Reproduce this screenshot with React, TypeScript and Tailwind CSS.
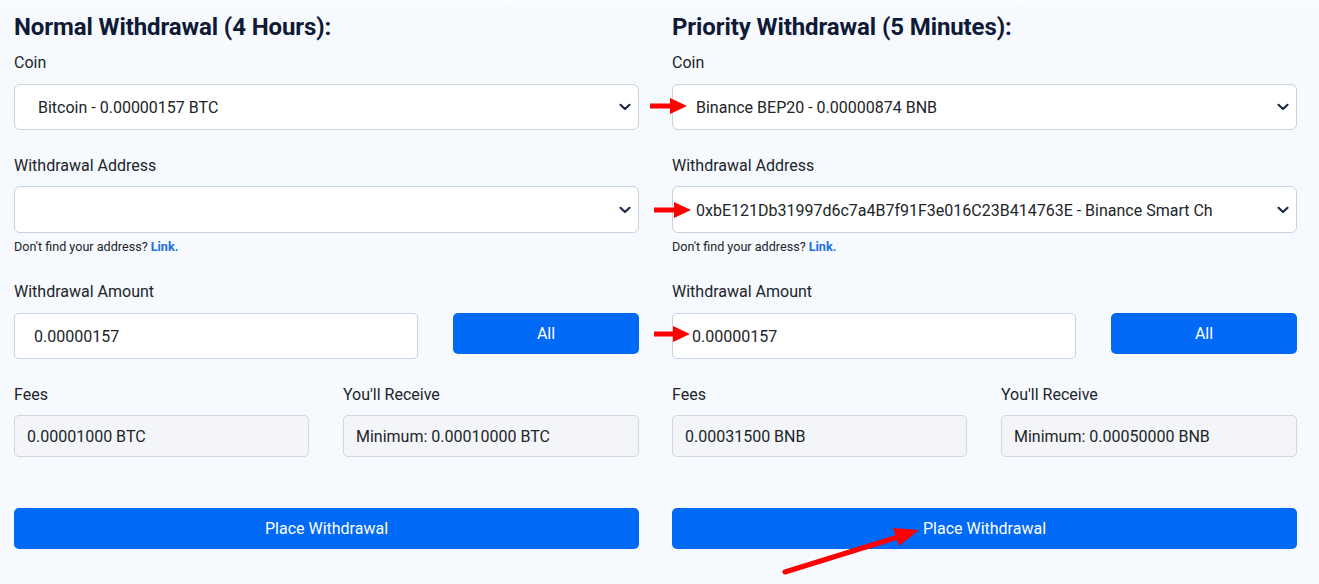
import React from 'react';

type Side = {
  title: string;
  coin: string;
  address: string;
  amount: string;
  fees: string;
  receive: string;
};

const sides: Side[] = [
  {
    title: 'Normal Withdrawal (4 Hours):',
    coin: 'Bitcoin - 0.00000157 BTC',
    address: '',
    amount: '0.00000157',
    fees: '0.00001000 BTC',
    receive: 'Minimum: 0.00010000 BTC',
  },
  {
    title: 'Priority Withdrawal (5 Minutes):',
    coin: 'Binance BEP20 - 0.00000874 BNB',
    address: '0xbE121Db31997d6c7a4B7f91F3e016C23B414763E - Binance Smart Ch',
    amount: '0.00000157',
    fees: '0.00031500 BNB',
    receive: 'Minimum: 0.00050000 BNB',
  },
];

function Chevron() {
  return (
    <svg width="12" height="8" viewBox="0 0 12 8" className="shrink-0">
      <path d="M1.5 1.8 L6 6 L10.5 1.8" fill="none" stroke="#1f2a44" strokeWidth="2.2" strokeLinecap="round" strokeLinejoin="round" />
    </svg>
  );
}

function FakeSelect({ value, h }: { value: string; h: string }) {
  return (
    <div className={`${h} flex items-center bg-white border border-[#c8d1de] rounded-[6px] pl-[23px] pr-[7px]`}>
      <span className="flex-1 pt-[2px] text-[16px] text-[#212529] whitespace-nowrap overflow-hidden">{value}</span>
      <Chevron />
    </div>
  );
}

function Column({ s }: { s: Side }) {
  return (
    <div className="w-[625px] flex flex-col">
      <h2 className="text-[24px] leading-[30px] font-bold tracking-[-0.1px] text-[#0f1a36]">{s.title}</h2>

      <label className="mt-[9px] leading-[24px] text-[16px] text-[#212529]">Coin</label>
      <div className="mt-[9px]">
        <FakeSelect value={s.coin} h="h-[46px]" />
      </div>

      <label className="mt-[24px] leading-[24px] text-[16px] text-[#212529]">Withdrawal Address</label>
      <div className="mt-[8px]">
        <FakeSelect value={s.address} h="h-[47px]" />
      </div>
      <p className="mt-[6px] leading-[16px] text-[12.6px] text-[#212529]">
        Don't find your address? <a className="font-bold text-[#1a6fe8]">Link.</a>
      </p>

      <label className="mt-[25px] leading-[24px] text-[16px] text-[#212529]">Withdrawal Amount</label>
      <div className="mt-[9px] flex items-start">
        <div className="w-[404px] h-[46px] flex items-center bg-white border border-[#c8d1de] rounded-[5px] px-[19px] pt-[2px] text-[16px] text-[#212529]">
          {s.amount}
        </div>
        <button className="ml-[35px] flex-1 h-[41px] bg-[#0069f6] rounded-[5px] text-white text-[16px]">All</button>
      </div>

      <div className="mt-[23px] grid grid-cols-[295px_1fr] gap-[34px]">
        <div className="flex flex-col">
          <label className="mt-[1px] leading-[24px] text-[16px] text-[#212529]">Fees</label>
          <div className="mt-[8px] h-[42px] flex items-center bg-[#f3f5f9] border border-[#cfd6e0] rounded-[5px] px-[12px] pt-[2px] text-[16px] text-[#212529]">
            {s.fees}
          </div>
        </div>
        <div className="flex flex-col">
          <label className="mt-[1px] leading-[24px] text-[16px] text-[#212529]">You'll Receive</label>
          <div className="mt-[8px] h-[42px] flex items-center bg-[#f3f5f9] border border-[#cfd6e0] rounded-[5px] px-[12px] pt-[2px] text-[16px] text-[#212529]">
            {s.receive}
          </div>
        </div>
      </div>

      <button className="mt-[51px] h-[41px] bg-[#0069f6] rounded-[5px] text-white text-[16px]">Place Withdrawal</button>
    </div>
  );
}

export default function App() {
  return (
    <div className="relative w-[1319px] h-[584px] overflow-hidden bg-[#f6f9fe] font-['Roboto',sans-serif]">
      <div className="h-[12px] bg-gradient-to-b from-[#fafcff] to-[#f5f8fe]" />
      <div className="flex gap-[33px] px-[14px]">
        {sides.map((s) => (
          <Column key={s.title} s={s} />
        ))}
      </div>

      {/* red annotation arrows */}
      <svg className="absolute inset-0 pointer-events-none" width="1319" height="584">
        <g fill="#f00" stroke="#f00">
          <line x1="650" y1="106" x2="673" y2="106" strokeWidth="5" />
          <polygon points="670,98 687,106 670,114" stroke="none" />
          <line x1="654" y1="210" x2="677" y2="210" strokeWidth="5" />
          <polygon points="674,202 691,210 674,218" stroke="none" />
          <line x1="654" y1="334" x2="676" y2="334" strokeWidth="5" />
          <polygon points="673,326 690,334 673,342" stroke="none" />
          <line x1="785" y1="572" x2="898" y2="537" strokeWidth="5" strokeLinecap="round" />
          <polygon points="919,530 893,528 899,546" stroke="none" />
        </g>
      </svg>
    </div>
  );
}
